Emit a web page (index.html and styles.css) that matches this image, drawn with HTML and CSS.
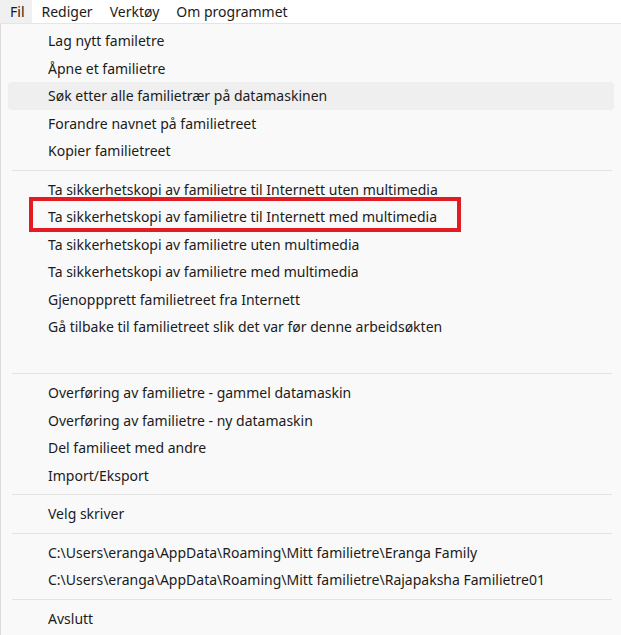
FILE: index.html
```html
<!DOCTYPE html>
<html lang="no">
<head>
<meta charset="utf-8">
<title>Fil-meny</title>
<link rel="stylesheet" href="styles.css">
</head>
<body>
<div class="menubar">
  <div class="mb-item active">Fil</div>
  <div class="mb-item">Rediger</div>
  <div class="mb-item">Verktøy</div>
  <div class="mb-item">Om programmet</div>
</div>
<div class="menu">
  <div class="item">Lag nytt familetre</div>
  <div class="item">Åpne et familietre</div>
  <div class="item hover">Søk etter alle familietrær på datamaskinen</div>
  <div class="item">Forandre navnet på familietreet</div>
  <div class="item">Kopier familietreet</div>
  <div class="sep"></div>
  <div class="item">Ta sikkerhetskopi av familietre til Internett uten multimedia</div>
  <div class="item marked">Ta sikkerhetskopi av familietre til Internett med multimedia</div>
  <div class="item">Ta sikkerhetskopi av familietre uten multimedia</div>
  <div class="item">Ta sikkerhetskopi av familietre med multimedia</div>
  <div class="item">Gjenoppprett familietreet fra Internett</div>
  <div class="item">Gå tilbake til familietreet slik det var før denne arbeidsøkten</div>
  <div class="item empty"></div>
  <div class="sep"></div>
  <div class="item">Overføring av familietre - gammel datamaskin</div>
  <div class="item">Overføring av familietre - ny datamaskin</div>
  <div class="item">Del familieet med andre</div>
  <div class="item">Import/Eksport</div>
  <div class="sep"></div>
  <div class="item">Velg skriver</div>
  <div class="sep"></div>
  <div class="item">C:\Users\eranga\AppData\Roaming\Mitt familietre\Eranga Family</div>
  <div class="item">C:\Users\eranga\AppData\Roaming\Mitt familietre\Rajapaksha Familietre01</div>
  <div class="sep"></div>
  <div class="item">Avslutt</div>
</div>
</body>
</html>
```
FILE: styles.css
```css
html, body {
  margin: 0;
  padding: 0;
  background: #ffffff;
  height: 100%;
  overflow: hidden;
}
body {
  font-family: "Noto Sans", "Open Sans", sans-serif;
  font-size: 14px;
  color: #1b1b1b;
}
.menubar {
  display: flex;
  height: 23px;
  background: #ffffff;
  align-items: stretch;
}
.mb-item {
  display: flex;
  align-items: center;
  padding: 0 8.5px 1px 8.5px;
}
.mb-item.active {
  background: #f0f0f0;
  padding-left: 10px;
  padding-right: 7px;
}
.mb-item.active + .mb-item {
  padding-left: 10px;
}
.menu {
  background: #f9f9f9;
  border-top: 1px solid #e5e5e5;
  border-left: 1px solid #dcdcdc;
  padding: 3px 7px 0 7px;
  height: 100%;
}
.item {
  position: relative;
  height: 27.5px;
  line-height: 27.5px;
  padding-left: 40px;
  border-radius: 4px;
  white-space: nowrap;
}
.item.hover {
  background: #efefef;
}
.item.marked::after {
  content: "";
  position: absolute;
  left: 21px;
  top: -6px;
  width: 424px;
  height: 27px;
  border: 4px solid #e31b23;
}
.sep {
  height: 1px;
  background: #e3e3e3;
  margin: 5px 2px 5px 4px;
}
```
